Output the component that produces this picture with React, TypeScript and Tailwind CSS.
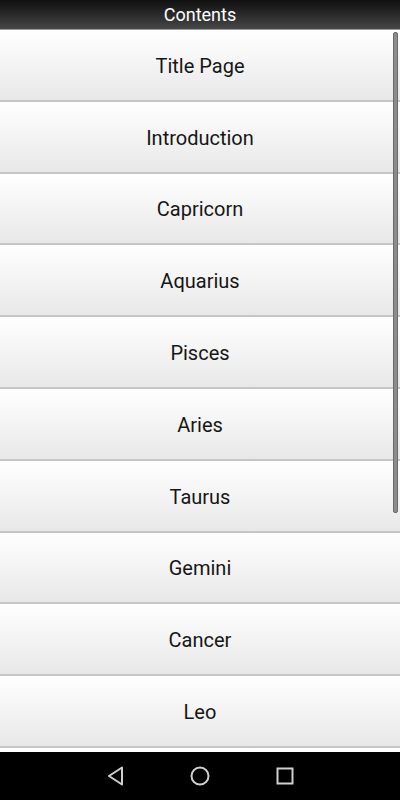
import React from 'react';

const chapters = [
  'Title Page',
  'Introduction',
  'Capricorn',
  'Aquarius',
  'Pisces',
  'Aries',
  'Taurus',
  'Gemini',
  'Cancer',
  'Leo',
];

const App: React.FC = () => {
  return (
    <div className="w-[400px] h-[800px] flex flex-col bg-white overflow-hidden font-['Roboto',sans-serif]">
      {/* Header */}
      <div className="h-[30px] shrink-0 flex items-center justify-center bg-gradient-to-b from-[#101010] to-[#474747] border-b border-[#9a9a9a]">
        <span className="text-white text-[18px] leading-none">Contents</span>
      </div>

      {/* List */}
      <div className="relative flex-1 overflow-hidden">
        <ul className="flex flex-col">
          {chapters.map((name) => (
            <li
              key={name}
              className="h-[71.8px] shrink-0 flex items-center justify-center bg-gradient-to-b from-white to-[#e8e8e8] border-b-2 border-[#c6c6c6]"
            >
              <span className="text-[#161616] text-[20px] leading-none mt-[2px]">{name}</span>
            </li>
          ))}
          <li className="h-[71.8px] shrink-0 bg-gradient-to-b from-white to-[#e8e8e8]" />
        </ul>
        {/* scrollbar */}
        <div className="absolute right-[2px] top-[2px] w-[5px] h-[481px] rounded-[2px] bg-[#8c8c8c] border border-[#6a6a6a]" />
      </div>

      {/* Nav bar */}
      <div className="h-[48px] shrink-0 bg-black flex items-center justify-center gap-[61px]">
        <svg width="24" height="24" viewBox="0 0 24 24" fill="none" stroke="#cfcfcf" strokeWidth="2" strokeLinejoin="round">
          <path d="M19 3.5 L6 12 L19 20.5 Z" />
        </svg>
        <svg width="24" height="24" viewBox="0 0 24 24" fill="none" stroke="#cfcfcf" strokeWidth="2">
          <circle cx="12" cy="12" r="8.5" />
        </svg>
        <svg width="24" height="24" viewBox="0 0 24 24" fill="none" stroke="#cfcfcf" strokeWidth="2">
          <rect x="4.5" y="4.5" width="15" height="15" />
        </svg>
      </div>
    </div>
  );
};

export default App;
